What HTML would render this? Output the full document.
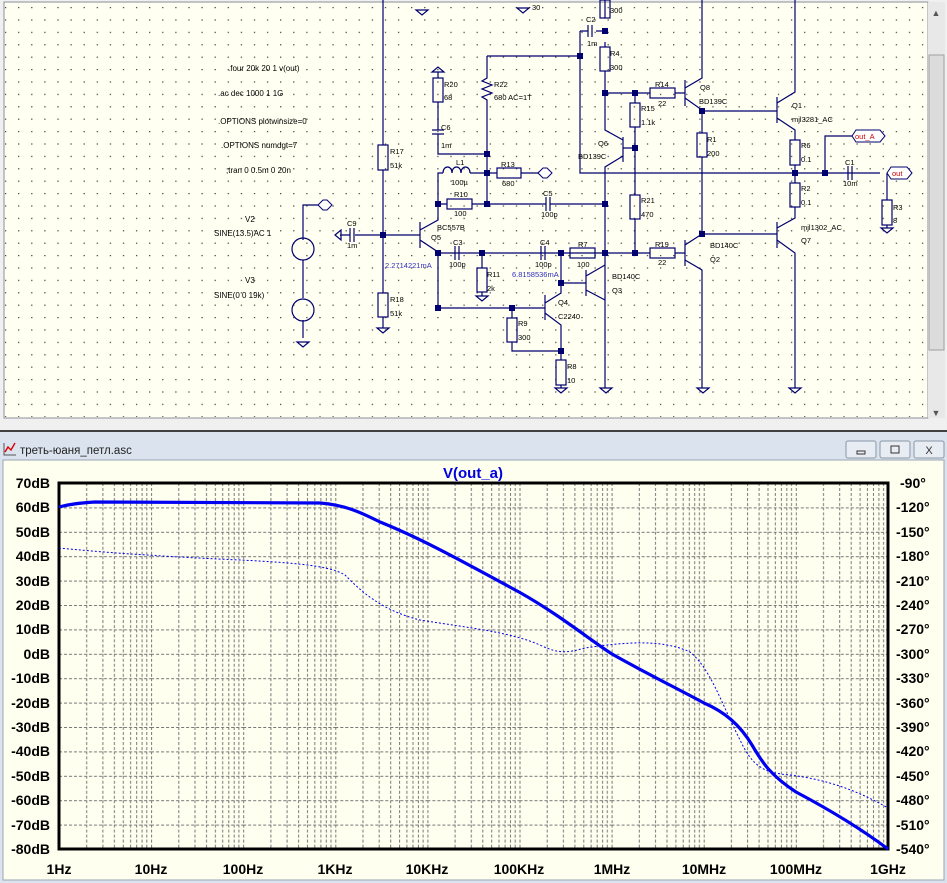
<!DOCTYPE html>
<html><head><meta charset="utf-8"><style>
html,body{margin:0;padding:0;width:947px;height:883px;overflow:hidden;background:#f0f0f0;font-family:"Liberation Sans",sans-serif}
svg{position:absolute;left:0;top:0}
</style></head><body>
<svg width="947" height="883" viewBox="0 0 947 883" xmlns="http://www.w3.org/2000/svg" font-family="Liberation Sans, sans-serif">
<defs>
<pattern id="dots" x="3" y="4" width="13.1" height="12.4" patternUnits="userSpaceOnUse"><rect x="2" y="3" width="1.2" height="1.2" fill="#333"/></pattern>
<pattern id="grid" x="59" y="483" width="92.1" height="24.4" patternUnits="userSpaceOnUse">
<g stroke="#777" stroke-width="1" stroke-dasharray="3,2" fill="none">
<line x1="0" y1="0.5" x2="92.1" y2="0.5"/>
<line x1="0.5" y1="0" x2="0.5" y2="24.4"/><line x1="27.7" y1="0" x2="27.7" y2="24.4"/><line x1="43.9" y1="0" x2="43.9" y2="24.4"/><line x1="55.4" y1="0" x2="55.4" y2="24.4"/><line x1="64.3" y1="0" x2="64.3" y2="24.4"/><line x1="71.6" y1="0" x2="71.6" y2="24.4"/><line x1="77.7" y1="0" x2="77.7" y2="24.4"/><line x1="83.1" y1="0" x2="83.1" y2="24.4"/><line x1="87.8" y1="0" x2="87.8" y2="24.4"/>
</g></pattern>
</defs>
<!-- schematic window -->
<rect x="0" y="0" width="947" height="430" fill="#f0f0f0"/>
<rect x="4" y="2" width="924" height="416" fill="#fffff2" stroke="#8a8f98"/>
<rect x="5" y="3" width="922" height="414" fill="url(#dots)"/>
<rect x="928" y="2" width="17" height="416" fill="#e8e8e8"/>
<rect x="929" y="55" width="15" height="295" fill="#dcdcdc" stroke="#a0a0a0"/>
<text x="936" y="16" font-size="9" fill="#555" text-anchor="middle">▲</text>
<text x="936" y="416" font-size="9" fill="#555" text-anchor="middle">▼</text>
<g font-size="8" fill="#000">
<text x="228" y="71">.four 20k 20 1 v(out)</text>
<text x="218" y="96">.ac dec 1000 1 1G</text>
<text x="218" y="124">.OPTIONS plotwinsize=0</text>
<text x="221" y="148">.OPTIONS numdgt=7</text>
<text x="226" y="173">;tran 0 0.5m 0 20n</text>
<text x="245" y="222">V2</text><text x="214" y="236">SINE(13.5)AC 1</text>
<text x="245" y="283">V3</text><text x="214" y="298">SINE(0 0 19k)</text>
</g>
<g stroke="#000070" stroke-width="1.2" fill="none">
<!-- sources -->
<path d="M303 240V205H318 M303 260V298 M303 320V338"/>
<circle cx="303" cy="249" r="11"/><circle cx="303" cy="310" r="11"/>
<path d="M297 342h12l-6 5z M416 10h12l-6 5z M517 8h12l-6 5z"/>
<path d="M383 0V145 M383 170V293 M383 317V328 M377 328h12l-6 5z"/>
<rect x="378" y="145" width="10" height="25"/><rect x="378" y="293" width="10" height="24"/>
<path d="M340 235H350 M355 235H420 M350 228v14 M354 228v14 M335 235l6-5v10z"/>
<path d="M420 222v26 M420 230L438 220V204 M420 240L438 252V253"/>
<path d="M438 204H447 M472 204H546 M550 204H605 M546 197v14 M550 197v14"/>
<rect x="447" y="199" width="25" height="10"/>
<path d="M438 204V173 H443 M470 173 H497 M521 173H538 l5-4 8 4-8 4-5-4"/>
<path d="M443 173c0-8 9-8 9 0c0-8 9-8 9 0c0-8 9-8 9 0"/>
<rect x="497" y="168" width="24" height="10"/>
<path d="M487 56V78l-5 3 10 4-10 4 10 4-10 4 5 3V204 M487 56H580"/>
<path d="M438 78V72 l-6 0 6-5 6 5h-6 M438 102V130 M432 130h12 M432 134h12 M438 134V154H487"/>
<rect x="433" y="78" width="10" height="24"/>
<path d="M580 31V173H880 M580 31H588 M596 31H605 M588 25v12 M592 25v12"/>
<path d="M605 0V18 M605 42V47 M605 71V130 L623 140 M623 137v25 M623 156L605 167V388 M600 388h12l-6 5z"/>
<rect x="600" y="0" width="10" height="18"/><rect x="600" y="47" width="10" height="24"/>
<path d="M605 93H650 M675 93H685 M685 80v26 M685 88L702 78V0 M685 98L702 110V111H777 M702 111V133 M702 157V234 M702 234H777"/>
<rect x="650" y="88" width="25" height="10"/><rect x="697" y="133" width="10" height="24"/>
<path d="M635 93V103 M635 127V195 M623 148H635 M635 219V253"/>
<rect x="630" y="103" width="10" height="24"/><rect x="630" y="195" width="10" height="24"/>
<path d="M438 253H650 M675 253H685 M685 240v26 M685 245L702 234 M685 260L702 270V388 M697 388h12l-6 5z"/>
<rect x="650" y="248" width="25" height="10"/>
<path d="M455 246v14 M459 246v14 M541 246v14 M545 246v14"/>
<path d="M482 253V268 M482 292V296 M476 296h12l-6 5z"/><rect x="477" y="268" width="10" height="24"/>
<rect x="570" y="248" width="25" height="10"/>
<path d="M438 253V308H545 M545 295v25 M545 303L561 293V253 M545 313L561 325V351H512V342 M512 308V318 M561 351V360 M561 385V388 M555 388h12l-6 5z"/>
<rect x="507" y="318" width="10" height="24"/><rect x="556" y="360" width="10" height="25"/>
<path d="M561 283H586 M586 270v26 M586 276L605 265 M586 290L605 300"/>
<path d="M777 97v26 M777 103L795 92V0 M777 118L795 130V140 M795 165V183 M795 207V218L777 228 M777 222v26 M777 240L795 253V388 M789 388h12l-6 5z"/>
<rect x="790" y="140" width="10" height="25"/><rect x="790" y="183" width="10" height="24"/>
<path d="M825 173V136H852 M848 166v14 M852 166v14 M887 173V200 M887 225V228 M881 228h12l-6 5z"/>
<rect x="882" y="200" width="10" height="25"/>
</g>
<g fill="#000070">
<rect x="380" y="232" width="6" height="6"/><rect x="435" y="201" width="6" height="6"/><rect x="484" y="201" width="6" height="6"/><rect x="484" y="170" width="6" height="6"/><rect x="484" y="151" width="6" height="6"/><rect x="577" y="53" width="6" height="6"/><rect x="602" y="28" width="6" height="6"/><rect x="602" y="90" width="6" height="6"/><rect x="632" y="90" width="6" height="6"/><rect x="632" y="145" width="6" height="6"/><rect x="602" y="201" width="6" height="6"/><rect x="602" y="250" width="6" height="6"/><rect x="632" y="250" width="6" height="6"/><rect x="435" y="250" width="6" height="6"/><rect x="479" y="250" width="6" height="6"/><rect x="558" y="250" width="6" height="6"/><rect x="558" y="280" width="6" height="6"/><rect x="435" y="305" width="6" height="6"/><rect x="509" y="305" width="6" height="6"/><rect x="558" y="348" width="6" height="6"/><rect x="699" y="108" width="6" height="6"/><rect x="699" y="231" width="6" height="6"/><rect x="792" y="170" width="6" height="6"/><rect x="822" y="170" width="6" height="6"/>
</g>
<g stroke="#000070" fill="#fff"><path d="M852 136l4-6h24l5 6-5 6h-24z M887 173l4-6h16l5 6-5 6h-16z M538 173l5-5h4l5 5-5 5h-4z M318 205l5-5h4l5 5-5 5h-4z"/></g>
<g font-size="7.5" fill="#c00"><text x="855" y="139">out_A</text><text x="892" y="176">out</text></g>
<g font-size="7.5" fill="#000">
<text x="390" y="154">R17</text><text x="390" y="168">51k</text><text x="390" y="302">R18</text><text x="390" y="316">51k</text>
<text x="347" y="226">C9</text><text x="347" y="248">1m</text>
<text x="437" y="230">BC557B</text><text x="431" y="240">Q5</text>
<text x="454" y="197">R10</text><text x="454" y="216">100</text>
<text x="456" y="165">L1</text><text x="451" y="185">100µ</text>
<text x="501" y="167">R13</text><text x="502" y="186">680</text>
<text x="494" y="87">R22</text><text x="494" y="100">680 AC=1T</text>
<text x="444" y="87">R20</text><text x="444" y="100">68</text>
<text x="441" y="130">C6</text><text x="441" y="148">1m</text>
<text x="543" y="196">C5</text><text x="541" y="217">100p</text>
<text x="586" y="22">C2</text><text x="587" y="46">1m</text>
<text x="610" y="13">300</text><text x="610" y="56">R4</text><text x="610" y="70">300</text>
<text x="598" y="146">Q6</text><text x="578" y="159">BD139C</text>
<text x="453" y="245">C3</text><text x="449" y="267">100p</text>
<text x="487" y="277">R11</text><text x="487" y="291">2k</text>
<text x="540" y="245">C4</text><text x="535" y="267">100p</text>
<text x="578" y="247">R7</text><text x="577" y="267">100</text>
<text x="385" y="268" fill="#3030c0">2.2714221mA</text><text x="512" y="277" fill="#3030c0">6.8158536mA</text>
<text x="612" y="279">BD140C</text><text x="612" y="293">Q3</text>
<text x="558" y="305">Q4</text><text x="558" y="319">C2240</text>
<text x="518" y="326">R9</text><text x="518" y="340">300</text>
<text x="567" y="369">R8</text><text x="567" y="383">10</text>
<text x="655" y="87">R14</text><text x="658" y="106">22</text>
<text x="700" y="90">Q8</text><text x="699" y="104">BD139C</text>
<text x="641" y="111">R15</text><text x="641" y="125">1.1k</text>
<text x="707" y="142">R1</text><text x="707" y="156">200</text>
<text x="641" y="203">R21</text><text x="641" y="217">470</text>
<text x="655" y="247">R19</text><text x="658" y="265">22</text>
<text x="710" y="248">BD140C</text><text x="710" y="262">Q2</text>
<text x="792" y="108">Q1</text><text x="792" y="122">mjl3281_AC</text>
<text x="801" y="148">R6</text><text x="801" y="162">0.1</text>
<text x="801" y="191">R2</text><text x="801" y="205">0.1</text>
<text x="801" y="230">mjl1302_AC</text><text x="801" y="243">Q7</text>
<text x="845" y="165">C1</text><text x="843" y="186">10m</text>
<text x="893" y="210">R3</text><text x="893" y="223">8</text>
<text x="532" y="10">30</text>
</g>
<!-- divider -->
<rect x="0" y="430" width="947" height="2" fill="#404040"/>
<rect x="0" y="432" width="947" height="451" fill="#dbe4ee"/>
<g transform="translate(4,441)"><path d="M0 2v12h12" stroke="#555" fill="none"/><path d="M1 11l3-5 3 3 4-7" stroke="#d00" stroke-width="1.4" fill="none"/></g>
<text x="20" y="454" font-size="11.5" fill="#222">треть-юаня_петл.asc</text>
<g fill="#e8edf3" stroke="#8a96a6"><rect x="846" y="441" width="30" height="17" rx="2"/><rect x="880" y="441" width="30" height="17" rx="2"/><rect x="914" y="441" width="30" height="17" rx="2"/></g>
<g stroke="#333" fill="none"><rect x="857" y="451" width="8" height="3"/><rect x="891" y="446" width="8" height="7"/></g>
<text x="929" y="454" font-size="11" fill="#333" text-anchor="middle">X</text>
<!-- plot -->
<rect x="3" y="460" width="941" height="420" fill="#fffff0" stroke="#9aa6b4"/>
<rect x="59" y="483" width="829" height="366" fill="url(#grid)"/>
<text x="473" y="478" font-size="15" font-weight="bold" fill="#0000e0" text-anchor="middle">V(out_a)</text>
<g stroke="#000" stroke-width="3" fill="none"><path d="M59 483H888V849H59z"/></g>
<g font-size="14" font-weight="bold" fill="#000" text-anchor="end">
<text x="50" y="488">70dB</text><text x="50" y="512">60dB</text><text x="50" y="537">50dB</text><text x="50" y="561">40dB</text><text x="50" y="586">30dB</text><text x="50" y="610">20dB</text><text x="50" y="634">10dB</text><text x="50" y="659">0dB</text><text x="50" y="683">-10dB</text><text x="50" y="708">-20dB</text><text x="50" y="732">-30dB</text><text x="50" y="756">-40dB</text><text x="50" y="781">-50dB</text><text x="50" y="805">-60dB</text><text x="50" y="830">-70dB</text><text x="50" y="854">-80dB</text>
</g>
<g font-size="14" font-weight="bold" fill="#000" text-anchor="start">
<text x="900" y="488">-90°</text><text x="896" y="512">-120°</text><text x="896" y="537">-150°</text><text x="896" y="561">-180°</text><text x="896" y="586">-210°</text><text x="896" y="610">-240°</text><text x="896" y="634">-270°</text><text x="896" y="659">-300°</text><text x="896" y="683">-330°</text><text x="896" y="708">-360°</text><text x="896" y="732">-390°</text><text x="896" y="756">-420°</text><text x="896" y="781">-450°</text><text x="896" y="805">-480°</text><text x="896" y="830">-510°</text><text x="896" y="854">-540°</text>
</g>
<g font-size="14" font-weight="bold" fill="#000" text-anchor="middle">
<text x="59" y="874">1Hz</text><text x="151" y="874">10Hz</text><text x="243" y="874">100Hz</text><text x="335" y="874">1KHz</text><text x="427" y="874">10KHz</text><text x="519" y="874">100KHz</text><text x="612" y="874">1MHz</text><text x="704" y="874">10MHz</text><text x="796" y="874">100MHz</text><text x="888" y="874">1GHz</text>
</g>
<path d="M59 507 C70 504 80 503 95 502 L320 503 C345 505 360 512 380 522 C420 538 460 560 519 592 C560 615 590 640 612 654 C640 670 680 690 704 703 C725 712 740 725 752 745 C762 762 770 775 796 792 C830 810 860 828 888 849" stroke="#0000f0" stroke-width="3.2" fill="none"/>
<path d="M59 548 C100 552 150 556 240 560 C300 563 330 566 345 575 C360 590 380 610 420 620 C470 628 510 632 540 645 C560 655 570 652 585 648 C620 643 660 638 690 652 C710 668 720 700 740 740 C752 765 762 773 790 775 C830 780 860 792 888 808" stroke="#0000f0" stroke-width="1" stroke-dasharray="2,2" fill="none"/>
</svg>
</body></html>
